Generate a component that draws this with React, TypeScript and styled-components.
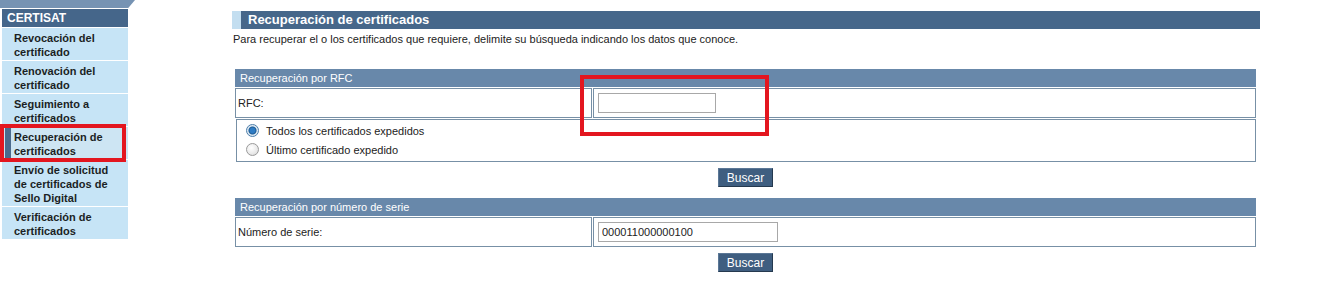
import styled, { createGlobalStyle } from 'styled-components';
import React from 'react';

const GlobalStyle = createGlobalStyle`
  body {
    margin: 0;
    background: #ffffff;
    font-family: "Liberation Sans", Arial, sans-serif;
  }
`;

const menu = [
  { label: 'Revocación del certificado' },
  { label: 'Renovación del certificado' },
  { label: 'Seguimiento a certificados' },
  { label: 'Recuperación de certificados', active: true },
  { label: 'Envío de solicitud de certificados de Sello Digital' },
  { label: 'Verificación de certificados' },
];

export default function App() {
  return (
    <Page>
      <GlobalStyle />

      <Sidebar>
        <TopTab />
        <MenuHeader>CERTISAT</MenuHeader>
        {menu.map((item) => (
          <MenuItem key={item.label} $active={item.active}>
            {item.label}
          </MenuItem>
        ))}
        <Highlight style={{ left: 0, top: 124, width: 126, height: 38 }} />
      </Sidebar>

      <Main>
        <TitleBar>Recuperación de certificados</TitleBar>
        <Intro>
          Para recuperar el o los certificados que requiere, delimite su búsqueda indicando los datos que conoce.
        </Intro>

        <Section>
          <SectionHeader>Recuperación por RFC</SectionHeader>
          <Row>
            <LabelCell>RFC:</LabelCell>
            <InputCell>
              <TextInput $width={118} defaultValue="" />
            </InputCell>
          </Row>
          <OptionsBox>
            <Option>
              <Radio $checked />
              Todos los certificados expedidos
            </Option>
            <Option>
              <Radio />
              Último certificado expedido
            </Option>
          </OptionsBox>
          <ButtonRow>
            <Button>Buscar</Button>
          </ButtonRow>
          <Highlight style={{ left: 345, top: 6, width: 189, height: 61 }} />
        </Section>

        <Section $gap={11}>
          <SectionHeader>Recuperación por número de serie</SectionHeader>
          <Row>
            <LabelCell>Número de serie:</LabelCell>
            <InputCell>
              <TextInput $width={180} defaultValue="000011000000100" />
            </InputCell>
          </Row>
          <ButtonRow>
            <Button>Buscar</Button>
          </ButtonRow>
        </Section>
      </Main>
    </Page>
  );
}

const Page = styled.div`
  display: flex;
  align-items: flex-start;
  width: 1339px;
  height: 308px;
  overflow: hidden;
`;

const Sidebar = styled.nav`
  position: relative;
  width: 126px;
  padding-left: 2px;
  display: flex;
  flex-direction: column;
  gap: 1px;
`;

const TopTab = styled.div`
  height: 8px;
  margin-left: -2px;
  width: 135px;
  background: #7693b3;
  clip-path: polygon(0 0, 100% 0, 95% 100%, 0 100%);
`;

const MenuHeader = styled.div`
  height: 18px;
  line-height: 18px;
  padding-left: 5px;
  background: #45668a;
  color: #ffffff;
  font-size: 12px;
  font-weight: bold;
`;

const MenuItem = styled.div<{ $active?: boolean }>`
  padding: 3px 6px 1px 12px;
  background: ${(p) =>
    p.$active
      ? 'linear-gradient(to right, #cde5f3 0 3px, #4a6b8d 3px 9px, #cde5f3 9px)'
      : '#c6e4f6'};
  color: #1b1f24;
  font-size: 11px;
  font-weight: bold;
  line-height: 14px;
`;

const Highlight = styled.div`
  position: absolute;
  border: 4px solid #e3161f;
  box-sizing: border-box;
  pointer-events: none;
`;

const Main = styled.main`
  margin-left: 104px;
  padding-top: 11px;
  width: 1028px;
`;

const TitleBar = styled.h1`
  margin: 0;
  height: 18px;
  line-height: 18px;
  border-left: 9px solid #c3def0;
  padding-left: 7px;
  background: #46678a;
  color: #ffffff;
  font-size: 13px;
  font-weight: bold;
`;

const Intro = styled.p`
  margin: 2px 0 0 1px;
  font-size: 11px;
  line-height: 16px;
  color: #222222;
`;

const Section = styled.section<{ $gap?: number }>`
  position: relative;
  margin: ${(p) => p.$gap ?? 22}px 4px 0 3px;
  display: flex;
  flex-direction: column;
  gap: 1px;
`;

const SectionHeader = styled.div`
  height: 18px;
  line-height: 18px;
  padding-left: 5px;
  background: #6888aa;
  color: #ffffff;
  font-size: 11px;
`;

const Row = styled.div`
  display: flex;
  gap: 1px;
  height: 30px;
`;

const Cell = styled.div`
  box-sizing: border-box;
  height: 100%;
  border: 1px solid #7790a6;
  display: flex;
  align-items: center;
  font-size: 11px;
  color: #222222;
`;

const LabelCell = styled(Cell)`
  width: 357px;
  padding-left: 2px;
`;

const InputCell = styled(Cell)`
  flex: 1;
  padding-left: 4px;
`;

const TextInput = styled.input<{ $width: number }>`
  box-sizing: border-box;
  width: ${(p) => p.$width}px;
  height: 20px;
  border: 1px solid #a8a8a8;
  padding: 0 3px;
  font-family: "Liberation Sans", Arial, sans-serif;
  font-size: 11px;
  color: #222222;
  outline: none;
`;

const OptionsBox = styled.div`
  box-sizing: border-box;
  height: 43px;
  margin-left: 1px;
  border: 1px solid #7790a6;
  padding: 4px 0 0 9px;
  display: flex;
  flex-direction: column;
  gap: 6px;
`;

const Option = styled.label`
  display: flex;
  align-items: center;
  gap: 7px;
  height: 13px;
  font-size: 11px;
  color: #222222;
`;

const Radio = styled.span<{ $checked?: boolean }>`
  box-sizing: border-box;
  width: 13px;
  height: 13px;
  border-radius: 50%;
  border: 1px solid ${(p) => (p.$checked ? '#4d7eaa' : '#9a9a9a')};
  background: ${(p) =>
    p.$checked
      ? 'radial-gradient(circle, #2d7bc4 0 2.5px, #1c5a93 3.5px, #d9e6f1 4.5px, #f4f7fa 100%)'
      : 'radial-gradient(circle at 40% 35%, #ffffff 0, #e9e9e9 60%, #cfcfcf 100%)'};
`;

const ButtonRow = styled.div`
  display: flex;
  justify-content: center;
  padding-top: 5px;
`;

const Button = styled.button`
  height: 19px;
  width: 55px;
  padding: 0;
  border: 1px solid #25394f;
  border-top-color: #5b7796;
  border-left-color: #5b7796;
  background: #3f5e80;
  color: #ffffff;
  font-family: "Liberation Sans", Arial, sans-serif;
  font-size: 12px;
  cursor: pointer;
`;
